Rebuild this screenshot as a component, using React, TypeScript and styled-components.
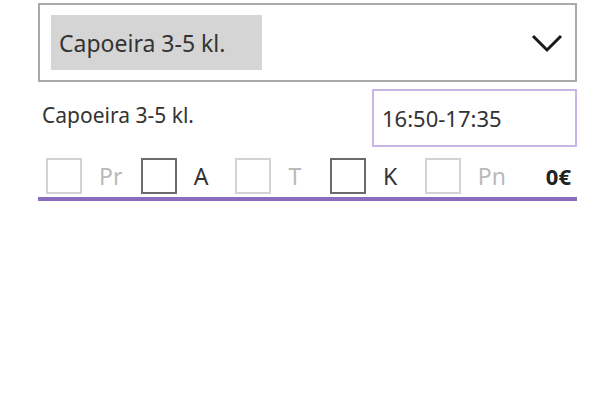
import React from "react";
import styled, { createGlobalStyle } from "styled-components";

const Global = createGlobalStyle`
  html, body { margin: 0; padding: 0; background: #fff; }
  body { font-family: "Noto Sans", "Open Sans", "Liberation Sans", sans-serif; color: #333; }
`;

const Panel = styled.div`
  width: 539px;
  margin: 3px 0 0 38px;
  display: flex;
  flex-direction: column;
`;

const Dropdown = styled.div`
  box-sizing: border-box;
  height: 79px;
  border: 2px solid #a9a9a9;
  display: flex;
  align-items: center;
  justify-content: space-between;
  padding: 0 12px 0 11px;
`;

const Selected = styled.div`
  background: #d5d5d5;
  height: 55px;
  width: 211px;
  box-sizing: border-box;
  display: flex;
  align-items: center;
  padding-left: 8px;
  font-size: 23px;
  color: #333;
  white-space: nowrap;
`;

const Chevron = styled.svg`
  width: 32px;
  height: 20px;
  display: block;
`;

const InfoRow = styled.div`
  display: flex;
  justify-content: space-between;
  align-items: center;
  margin-top: 7px;
`;

const Title = styled.div`
  font-size: 21px;
  color: #333;
  padding-left: 4px;
  margin-top: -6px;
  white-space: nowrap;
`;

const TimeBox = styled.div`
  box-sizing: border-box;
  width: 205px;
  height: 58px;
  border: 2px solid #c9b6e4;
  display: flex;
  align-items: center;
  padding-left: 8px;
  font-size: 22px;
  color: #333;
`;

const Days = styled.div`
  display: flex;
  align-items: center;
  height: 40px;
  margin-top: 9px;
  padding-left: 8px;
`;

const Day = styled.div`
  display: flex;
  align-items: center;
  width: 94.7px;
  flex: none;
`;

const Box = styled.div<{ $active: boolean }>`
  box-sizing: border-box;
  width: 36px;
  height: 36px;
  border: 2px solid ${(p) => (p.$active ? "#6b6b6b" : "#d3d3d3")};
  flex: none;
`;

const DayLabel = styled.span<{ $active: boolean }>`
  margin-left: 17px;
  font-size: 23px;
  color: ${(p) => (p.$active ? "#333" : "#b9b9b9")};
`;

const Price = styled.div`
  margin-left: auto;
  margin-right: 6px;
  font-size: 22px;
  font-weight: 700;
  color: #222;
`;

const Underline = styled.div`
  height: 4px;
  background: #8b6cbf;
  margin-top: 1px;
`;

const days = [
  { label: "Pr", active: false },
  { label: "A", active: true },
  { label: "T", active: false },
  { label: "K", active: true },
  { label: "Pn", active: false },
];

export default function App() {
  return (
    <>
      <Global />
      <Panel>
        <Dropdown>
          <Selected>Capoeira 3-5 kl.</Selected>
          <Chevron viewBox="0 0 32 20">
            <polyline points="2,3 16,17 30,3" fill="none" stroke="#1a1a1a" strokeWidth="3" />
          </Chevron>
        </Dropdown>
        <InfoRow>
          <Title>Capoeira 3-5 kl.</Title>
          <TimeBox>16:50-17:35</TimeBox>
        </InfoRow>
        <Days>
          {days.map((d) => (
            <Day key={d.label}>
              <Box $active={d.active} />
              <DayLabel $active={d.active}>{d.label}</DayLabel>
            </Day>
          ))}
          <Price>0€</Price>
        </Days>
        <Underline />
      </Panel>
    </>
  );
}
